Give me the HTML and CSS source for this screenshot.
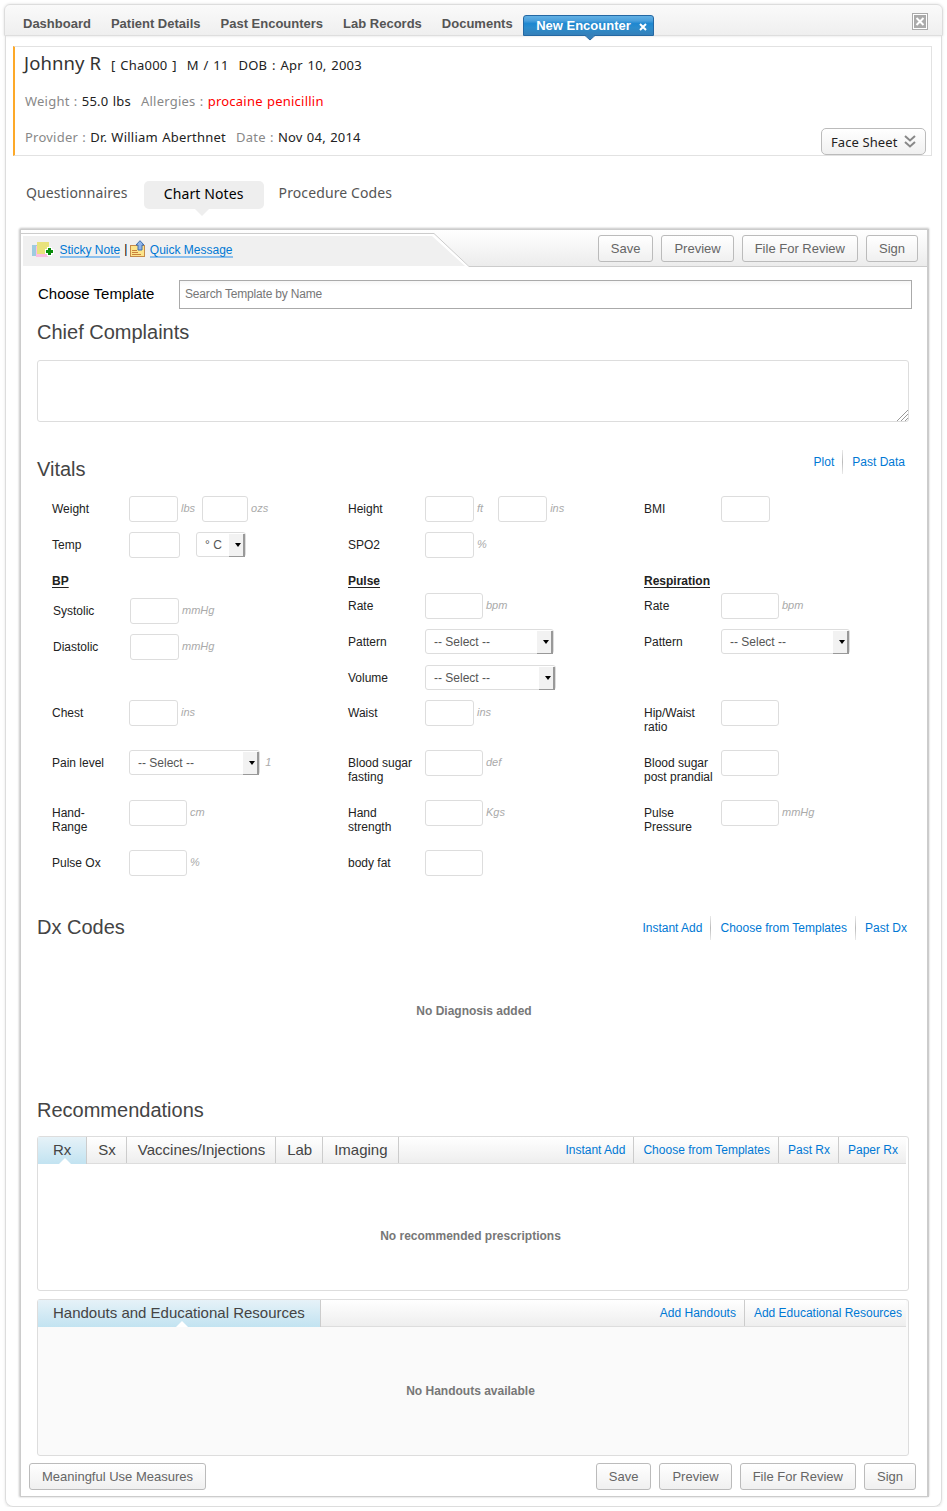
FILE: index.html
```html
<!DOCTYPE html>
<html lang="en">
<head>
<meta charset="utf-8">
<title>New Encounter</title>
<link rel="stylesheet" href="styles.css">
</head>
<body>
<header class="topbar">
  <nav class="nav">
    <a>Dashboard</a><a>Patient Details</a><a>Past Encounters</a><a>Lab Records</a><a>Documents</a>
    <a class="nav-active">New Encounter
      <svg class="nav-x" width="8" height="8" viewBox="0 0 8 8"><path d="M1 1L7 7M7 1L1 7" stroke="#fff" stroke-width="2" fill="none"/></svg>
      <svg class="nav-tip" width="10" height="6" viewBox="0 0 10 6"><path d="M0 0H10L5 5Z" fill="#3580b9"/><path d="M0 .5L5 5L10 .5" fill="none" stroke="#2566a0"/></svg>
    </a>
  </nav>
  <svg class="close" width="16" height="17" viewBox="0 0 16 17"><rect x=".5" y=".5" width="15" height="16" fill="#fff" stroke="#aaa"/><rect x="2" y="2" width="12" height="13" fill="#aaa"/><path d="M4.5 5L11.500 12M11.500 5L4.500 12" stroke="#fff" stroke-width="2"/></svg>
</header>
<main class="shell">
  <section class="patient">
    <div class="line line-name"><span class="name">Johnny R</span><span>[ Cha000 ]</span><span>M / 11</span><span>DOB : Apr 10, 2003</span></div>
    <div class="line"><span><i>Weight :</i> 55.0 lbs</span><span><i>Allergies :</i> <b>procaine penicillin</b></span></div>
    <div class="line"><span><i>Provider :</i> Dr. William Aberthnet</span><span><i>Date :</i> Nov 04, 2014</span></div>
    <a class="facesheet">Face Sheet
      <svg width="12" height="13" viewBox="0 0 12 13"><path d="M1 1L6 5.500L11 1M1 7L6 11.500L11 7" fill="none" stroke="#888" stroke-width="2"/></svg>
    </a>
  </section>
  <nav class="subtabs"><a>Questionnaires</a><a class="sub-active">Chart Notes</a><a>Procedure Codes</a></nav>

  <section class="panel">
    <div class="toolbar">
      <svg class="toolbar-bg" width="906" height="38" viewBox="0 0 906 38">
        <defs><linearGradient id="bar" x1="0" y1="0" x2="0" y2="1"><stop offset="0" stop-color="#fff"/><stop offset="1" stop-color="#ececec"/></linearGradient></defs>
        <path d="M0 0H906V36H448L413 4H0Z" fill="url(#bar)"/>
        <path d="M2 6H411L444 36H2Z" fill="#f0f0f0"/>
        <path d="M0 3.500H413L448 36.500H906" fill="none" stroke="#ccc"/>
      </svg>
      <div class="tools">
        <svg width="22" height="17" viewBox="0 0 22 17"><rect x="0" y="4" width="8" height="11" fill="#9ecbe0"/><rect x="4" y="5" width="12" height="11" fill="#fbbfe0"/><rect x="5" y="1" width="12" height="12" fill="#e8e27c"/><path d="M13 8H15V6H20V8H22V13H20V15H15V13H13Z" fill="#fff"/><path d="M17.500 7V14M14 10.500H21" stroke="#0a8c0a" stroke-width="3"/></svg>
        <a class="t-sticky">Sticky Note</a><span class="bar">|</span>
        <svg width="16" height="18" viewBox="0 0 16 18"><rect x=".5" y="5.500" width="14" height="11" fill="#fde48a" stroke="#c58a4a"/><path d="M2 10.500H7M2 12.500H8M2 14.500H11" stroke="#c9813d"/><path d="M10 .7L14 5H12V10H8V5H6Z" fill="#8fb5ea" stroke="#3f6fae"/></svg>
        <a>Quick Message</a>
      </div>
      <div class="buttons"><a class="btn">Save</a><a class="btn">Preview</a><a class="btn">File For Review</a><a class="btn">Sign</a></div>
    </div>

    <div class="template"><label>Choose Template</label><div class="search">Search Template by Name</div></div>

    <h2>Chief Complaints</h2>
    <div class="textarea"><svg width="11" height="11" viewBox="0 0 11 11"><path d="M0 11L11 0M4 11L11 4M8 11L11 8" stroke="#999"/></svg></div>

    <div class="head vitals-head"><h2>Vitals</h2><div class="links"><a>Plot</a><a>Past Data</a></div></div>
    <div class="vitals">
      <div class="f"><label>Weight</label><b class="in w49"></b><i>lbs</i><b class="in w46 ml7"></b><i>ozs</i></div>
      <div class="f"><label>Height</label><b class="in w49"></b><i>ft</i><b class="in w49 ml15"></b><i>ins</i></div>
      <div class="f"><label>BMI</label><b class="in w49"></b></div>

      <div class="f"><label>Temp</label><b class="in w51"></b><span class="sel w50 ml16">° C</span></div>
      <div class="f"><label>SPO2</label><b class="in w49"></b><i>%</i></div>
      <div class="f"></div>

      <div class="group group-bp"><h3>BP</h3>
        <div class="f"><label>Systolic</label><b class="in w49"></b><i>mmHg</i></div>
        <div class="f"><label>Diastolic</label><b class="in w49"></b><i>mmHg</i></div>
      </div>
      <div class="group"><h3>Pulse</h3>
        <div class="f"><label>Rate</label><b class="in w58"></b><i>bpm</i></div>
        <div class="f"><label>Pattern</label><span class="sel w129">-- Select --</span></div>
        <div class="f"><label>Volume</label><span class="sel w131">-- Select --</span></div>
      </div>
      <div class="group"><h3>Respiration</h3>
        <div class="f"><label>Rate</label><b class="in w58"></b><i>bpm</i></div>
        <div class="f"><label>Pattern</label><span class="sel w129">-- Select --</span></div>
      </div>

      <div class="f"><label>Chest</label><b class="in w49"></b><i>ins</i></div>
      <div class="f"><label>Waist</label><b class="in w49"></b><i>ins</i></div>
      <div class="f"><label>Hip/Waist<br>ratio</label><b class="in w58"></b></div>

      <div class="f"><label>Pain level</label><span class="sel w131">-- Select --</span><i>&thinsp;1</i></div>
      <div class="f"><label>Blood sugar<br>fasting</label><b class="in w58"></b><i>def</i></div>
      <div class="f"><label>Blood sugar<br>post prandial</label><b class="in w58"></b></div>

      <div class="f"><label>Hand-<br>Range</label><b class="in w58"></b><i>cm</i></div>
      <div class="f"><label>Hand<br>strength</label><b class="in w58"></b><i>Kgs</i></div>
      <div class="f"><label>Pulse<br>Pressure</label><b class="in w58"></b><i>mmHg</i></div>

      <div class="f"><label>Pulse Ox</label><b class="in w58"></b><i>%</i></div>
      <div class="f"><label>body fat</label><b class="in w58"></b></div>
      <div class="f"></div>
    </div>

    <div class="head dx-head"><h2>Dx Codes</h2><div class="links"><a>Instant Add</a><a>Choose from Templates</a><a>Past Dx</a></div></div>
    <p class="empty dx-empty">No Diagnosis added</p>

    <h2 class="rec-title">Recommendations</h2>
    <div class="box box-rx">
      <div class="box-head">
        <div class="tabs"><a class="on">Rx</a><a>Sx</a><a>Vaccines/Injections</a><a>Lab</a><a>Imaging</a></div>
        <div class="box-links"><a>Instant Add</a><a>Choose from Templates</a><a>Past Rx</a><a>Paper Rx</a></div>
      </div>
      <p class="empty">No recommended prescriptions</p>
    </div>
    <div class="box box-ho">
      <div class="box-head">
        <div class="tabs"><a class="on">Handouts and Educational Resources</a></div>
        <div class="box-links"><a>Add Handouts</a><a>Add Educational Resources</a></div>
      </div>
      <p class="empty">No Handouts available</p>
    </div>

    <div class="foot">
      <a class="btn">Meaningful Use Measures</a>
      <div class="buttons"><a class="btn">Save</a><a class="btn">Preview</a><a class="btn">File For Review</a><a class="btn">Sign</a></div>
    </div>
  </section>
</main>
</body>
</html>
```
FILE: styles.css
```css
* { box-sizing: border-box; }
body { margin: 0; padding: 4px 4px 0; background: #fff; font-family: "Liberation Sans", Arial, sans-serif; font-size: 12px; color: #222; }
h2, h3, p { margin: 0; }
i { font-style: normal; }
a, span, label, i { white-space: nowrap; }

.topbar { display: flex; justify-content: space-between; width: 939px; height: 32px; border: 1px solid #ddd; border-radius: 6px 6px 0 0; background: linear-gradient(#fafafa, #efefef); box-shadow: 0 0 3px #ddd; padding: 0 14px 0 18px; }
.nav { display: flex; gap: 20px; font-size: 13px; font-weight: bold; color: #555; line-height: 37px; height: 30px; }
.nav-active { position: relative; display: flex; align-items: center; gap: 8px; width: 131px; height: 21px; margin: 10px 0 0 -10px; padding: 1px 0 0 12.5px; border: 1px solid #2468a3; border-radius: 3px 3px 0 0; color: #fff; line-height: 20px; background: linear-gradient(#62b0e4 0, #4ba0dc 25%, #1e87d0 40%, #2b8ccd 60%, #3580b9); }
.nav-tip { position: absolute; left: 61px; top: 19px; }
.nav-x { margin-top: 1px; }
.close { margin-top: 8px; }

.shell { width: 937px; height: 1471px; margin-left: 1px; border: 1px solid #ddd; border-top: 0; border-radius: 0 0 8px 8px; box-shadow: 0 1px 3px #e4e4e4; padding: 10px 8px 0 8px; }
.patient { position: relative; width: 919px; height: 110px; margin-left: -1px; border: 1px solid #e2e2e2; border-left: 2px solid #fda929; font: 13px "Noto Sans", sans-serif; color: #222; padding: 0 0 0 10px; letter-spacing: .23px; word-spacing: .6px; }
.line { display: flex; gap: 10px; align-items: baseline; height: 36px; line-height: 36px; }
.line i { color: #888; }
.line b { color: #f00; font-weight: normal; }
.line-name { height: 36px; margin-left: -1px; gap: 10px; line-height: 32px; letter-spacing: .2px; word-spacing: 1.2px; }
.name { font-size: 18.5px; color: #333; letter-spacing: .1px; word-spacing: 0; }
.facesheet { position: absolute; right: 5px; bottom: 0; display: flex; align-items: center; gap: 6px; width: 105px; height: 27px; padding-left: 9px; border: 1px solid #bbb; border-radius: 5px; background: linear-gradient(#fff, #f0f0f0); letter-spacing: .1px; word-spacing: 0; }
.subtabs { display: flex; height: 28px; margin: 25px 0 20px 12px; font: 14px/23px "Noto Sans", sans-serif; color: #555; letter-spacing: .1px; }
.sub-active { position: relative; width: 120px; height: 28px; margin: 0 15px 0 16px; border-radius: 5px; background: #eee; color: #000; line-height: 25px; text-align: center; }
.sub-active::after { content: ""; position: absolute; left: 51px; top: 28px; border: 7px solid transparent; border-top-color: #eee; border-bottom: 0; }

.panel { width: 909px; height: 1268px; margin-left: 6px; border: 2px solid #ccc; border-width: 1px 2px 1px 1px; box-shadow: 0 -1px 2px #ccc, -1px 0 2px #ccc; }
.toolbar { position: relative; display: flex; justify-content: space-between; height: 38px; padding: 5px 9px 0 11px; }
.toolbar-bg { position: absolute; left: 0; top: 0; }
.tools, .buttons { position: relative; display: flex; }
.tools { align-items: center; height: 28px; }
.tools a { color: #0078d4; line-height: 14px; border-bottom: 2px solid #8bbfec; height: 15px; margin-top: 2px; }
.t-sticky { margin-left: 5.5px; }
.tools .bar { margin: 0 3px 0 4px; color: #000; }
.tools svg + a:last-child { margin-left: 3.5px; }
.buttons { gap: 8px; }
.btn { display: block; height: 27px; padding: 0 12px; border: 1px solid #bbb; border-radius: 3px; background: linear-gradient(#fff, #f0f0f0); color: #666; font-size: 13px; line-height: 25px; }

.template { display: flex; margin: 12px 0 0 17px; height: 29px; }
.template label { width: 141px; font-size: 15px; line-height: 28px; color: #000; }
.search { width: 733px; border: 1px solid #aaa; padding-left: 5px; font-size: 12px; letter-spacing: -.18px; line-height: 26px; color: #777; background: linear-gradient(#f6f6f6, #fff 5px); }
h2 { margin-left: 16px; font-size: 20px; font-weight: normal; line-height: 24px; color: #444; }
.template + h2 { margin-top: 11px; }
.textarea { display: flex; justify-content: flex-end; align-items: flex-end; width: 872px; height: 62px; margin: 16px 0 0 16px; border: 1px solid #ddd; border-radius: 3px; }
.head { display: flex; justify-content: space-between; height: 24px; }
.vitals-head { margin-top: 35px; padding-right: 22px; }
.links { display: flex; height: 24px; margin-top: -7px; color: #0078d4; line-height: 24px; }
.links a + a { margin-left: 8px; padding-left: 9px; border-left: 1px solid; border-image: linear-gradient(#eee, #bbb, #eee) 1; }
.vitals { display: grid; grid-template-columns: 296px 296px 260px; grid-template-rows: 36px 36px 132px 50px 50px 50px 50px; margin: 15px 0 0 31px; }
.f { display: flex; align-items: flex-start; height: 36px; }
.f label { width: 77px; line-height: 14px; padding-top: 6px; }
.f i { margin-left: 3px; font-size: 11px; font-style: italic; line-height: 25px; color: #aaa; }
.in { height: 26px; border: 1px solid #ddd; border-radius: 3px; }
.w46 { width: 46px; } .w49 { width: 49px; } .w50 { width: 50px; } .w51 { width: 51px; } .w58 { width: 58px; } .w129 { width: 129px; } .w131 { width: 131px; }
.ml7 { margin-left: 7px; } .ml15 { margin-left: 15px; } .ml16 { margin-left: 16px; }
.sel { position: relative; height: 25px; padding-left: 8px; border: 1px solid #ddd; border-radius: 3px; line-height: 25px; color: #555; }
.sel::before { content: ""; position: absolute; right: 0; top: 1px; width: 14px; height: 22px; background: #f2f2f2; border-right: 2px solid #999; border-bottom: 1px solid #999; }
.sel::after { content: ""; position: absolute; right: 4px; top: 10px; border: 3px solid transparent; border-top: 4px solid #000; border-bottom: 0; }
h3 { height: 25px; padding-top: 6px; font-size: 12px; line-height: 14px; text-decoration: underline; text-underline-offset: 2px; }
.group-bp h3 { height: 30px; }
.group-bp .f { margin-left: 1px; }

.dx-head { margin-top: 15px; padding-right: 20px; }
.dx-head .links { margin-top: 1px; }
.empty { font-weight: bold; text-align: center; color: #777; line-height: 14px; }
.dx-empty { margin-top: 65px; }
.rec-title { margin-top: 80px; }
.box { width: 872px; margin-left: 16px; border: 1px solid #ddd; border-radius: 3px; }
.box-rx { height: 155px; margin-top: 14px; }
.box-ho { height: 157px; margin-top: 8px; background: #fafafa; }
.box-head { display: flex; justify-content: space-between; height: 27px; margin-right: 2px; border-bottom: 1px solid #ddd; background: linear-gradient(#fff, #eee); }
.tabs { display: flex; font-size: 15px; line-height: 25px; color: #444; }
.tabs a { position: relative; padding: 0 10px 0 11px; border-right: 1px solid #ccc; height: 26px; }
.tabs .on { height: 27px; padding: 0 15px; background: linear-gradient(#e6f2f8, #c2e3f1); }
.tabs .on::after { content: ""; position: absolute; left: calc(50% - 3px); bottom: 0; border: 6px solid transparent; border-bottom-color: #fff; border-top: 0; }
.tabs .on:first-child:not(:last-child)::after { left: calc(50% - 3px); }
.box-links { display: flex; color: #0078d4; line-height: 26px; padding-right: 8px; }
.box-links a + a { margin-left: 8px; padding-left: 9px; border-left: 1px solid #ccc; }
.box-ho .box-links { padding-right: 4px; }
.box .empty { margin-top: 65px; margin-right: 5px; }
.box-ho .empty { margin-top: 57px; }
.foot { display: flex; justify-content: space-between; margin: 7px 11px 0 8px; }
```
